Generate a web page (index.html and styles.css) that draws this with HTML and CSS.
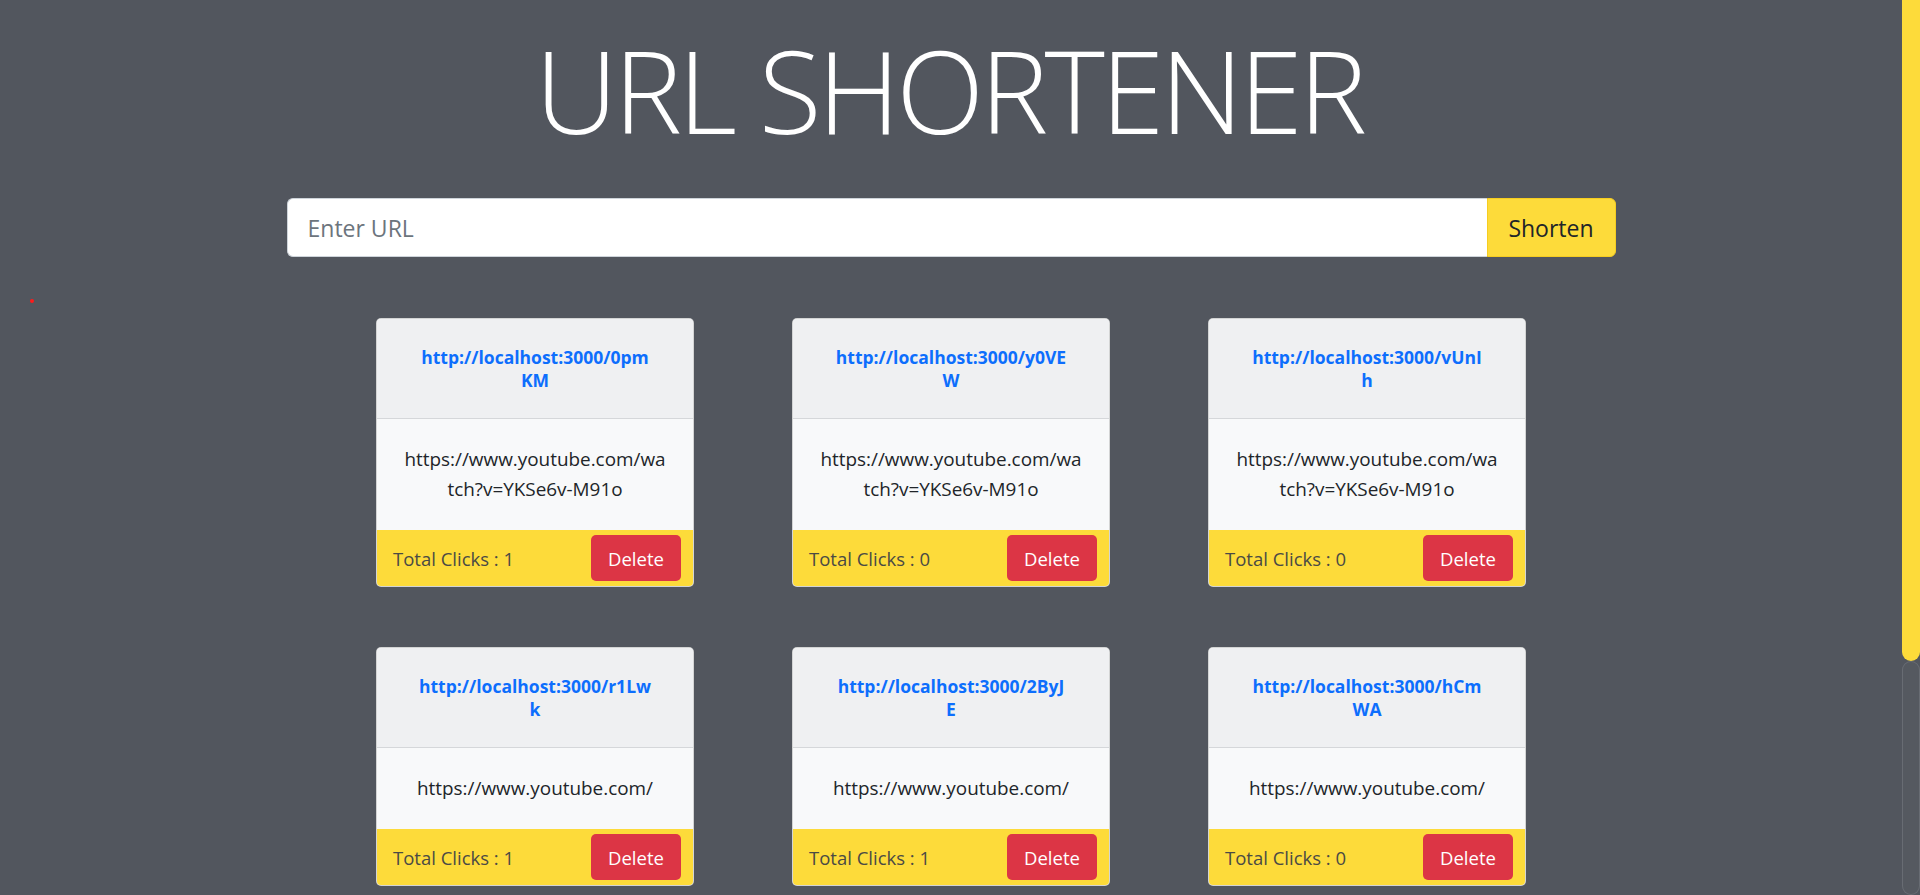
FILE: index.html
```html
<!DOCTYPE html>
<html lang="en">
<head>
<meta charset="utf-8">
<title>URL Shortener</title>
<link rel="stylesheet" href="styles.css">
</head>
<body>
<span class="dot"></span>
<div class="scrollbar" aria-hidden="true"><div class="scroll-thumb"></div><div class="scroll-track"></div></div>
<main class="page">
  <h1 class="title">URL SHORTENER</h1>
  <form class="shorten-form">
    <input class="url-input" type="text" placeholder="Enter URL">
    <button class="shorten-btn" type="button">Shorten</button>
  </form>
  <section class="cards">
    <article class="card">
      <div class="card-head"><a class="short-link" href="#">http://localhost:3000/0pmKM</a></div>
      <div class="card-body">https://www.youtube.com/watch?v=YKSe6v-M91o</div>
      <div class="card-foot"><span class="clicks">Total Clicks : 1</span><button class="del-btn" type="button">Delete</button></div>
    </article>
    <article class="card">
      <div class="card-head"><a class="short-link" href="#">http://localhost:3000/y0VEW</a></div>
      <div class="card-body">https://www.youtube.com/watch?v=YKSe6v-M91o</div>
      <div class="card-foot"><span class="clicks">Total Clicks : 0</span><button class="del-btn" type="button">Delete</button></div>
    </article>
    <article class="card">
      <div class="card-head"><a class="short-link" href="#">http://localhost:3000/vUnIh</a></div>
      <div class="card-body">https://www.youtube.com/watch?v=YKSe6v-M91o</div>
      <div class="card-foot"><span class="clicks">Total Clicks : 0</span><button class="del-btn" type="button">Delete</button></div>
    </article>
    <article class="card">
      <div class="card-head"><a class="short-link" href="#">http://localhost:3000/r1Lwk</a></div>
      <div class="card-body">https://www.youtube.com/</div>
      <div class="card-foot"><span class="clicks">Total Clicks : 1</span><button class="del-btn" type="button">Delete</button></div>
    </article>
    <article class="card">
      <div class="card-head"><a class="short-link" href="#">http://localhost:3000/2ByJE</a></div>
      <div class="card-body">https://www.youtube.com/</div>
      <div class="card-foot"><span class="clicks">Total Clicks : 1</span><button class="del-btn" type="button">Delete</button></div>
    </article>
    <article class="card">
      <div class="card-head"><a class="short-link" href="#">http://localhost:3000/hCmWA</a></div>
      <div class="card-body">https://www.youtube.com/</div>
      <div class="card-foot"><span class="clicks">Total Clicks : 0</span><button class="del-btn" type="button">Delete</button></div>
    </article>
  </section>
</main>
</body>
</html>
```

FILE: styles.css
```css
html {
  background: #52565e;
  scrollbar-width: none;
}
html::-webkit-scrollbar {
  display: none;
}
body {
  margin: 0;
  background: #52565e;
  font-family: "Open Sans", "Noto Sans", sans-serif;
  color: #212529;
  position: relative;
}
.dot {
  position: absolute;
  left: 30px;
  top: 299px;
  width: 4px;
  height: 4px;
  border-radius: 50%;
  background: #ff1a1a;
}
.scrollbar {
  position: fixed;
  top: 0;
  right: 0;
  width: 18px;
  height: 100vh;
  display: flex;
  flex-direction: column;
  background: #52565e;
  z-index: 10;
}
.scroll-thumb {
  height: 661px;
  flex: none;
  background: #fddb3a;
  border-radius: 0 0 9px 9px;
}
.scroll-track {
  flex: 1;
  border-radius: 9px;
  box-shadow: inset 0 0 0 1px #686c73;
  background: #555960;
}
.page {
  width: calc(100% - 18px);
  display: flex;
  flex-direction: column;
  align-items: center;
  padding-bottom: 325px;
}
.title {
  margin: 0;
  padding-top: 21px;
  padding-right: 4px;
  font-weight: 300;
  font-size: 115px;
  line-height: 1.2;
  color: #ffffff;
  letter-spacing: -4px;
}
.shorten-form {
  display: flex;
  width: 1329px;
  height: 59px;
  margin-top: 39px;
}
.url-input {
  flex: 1;
  min-width: 0;
  border: 1px solid #ced4da;
  border-right: none;
  border-radius: 6px 0 0 6px;
  padding: 0 20px;
  font-family: inherit;
  font-size: 23px;
  color: #212529;
  background: #fff;
  outline: none;
}
.url-input::placeholder {
  color: #6c757d;
}
.shorten-btn {
  border: 1px solid #f6cd20;
  border-radius: 0 6px 6px 0;
  background: #fddb3a;
  padding: 0 20px;
  font-family: inherit;
  font-size: 23px;
  color: #212529;
  width: 129px;
}
.cards {
  display: grid;
  grid-template-columns: repeat(3, 318px);
  column-gap: 98px;
  row-gap: 60px;
  margin-top: 61px;
}
.card {
  display: flex;
  flex-direction: column;
  border: 1px solid rgba(0, 0, 0, 0.15);
  border-radius: 5px;
  overflow: hidden;
  background: #f8f9fa;
}
.card-head {
  height: 99px;
  display: flex;
  align-items: center;
  justify-content: center;
  padding: 0 41.7px;
  background: #eff0f2;
  border-bottom: 1px solid #d5d7da;
  text-align: center;
}
.short-link {
  color: #0d6efd;
  font-weight: 700;
  font-size: 17.5px;
  line-height: 23px;
  text-decoration: none;
  word-break: break-all;
}
.card-body {
  padding: 25px 27px 26px;
  text-align: center;
  font-size: 18.9px;
  line-height: 30px;
  word-break: break-all;
  color: #212529;
}
.card-foot {
  display: flex;
  align-items: center;
  justify-content: space-between;
  padding: 5px 12px 5px 16px;
  background: #fddb3a;
}
.clicks {
  font-size: 18.5px;
  color: #4a4a45;
}
.del-btn {
  width: 90px;
  height: 46px;
  border: none;
  border-radius: 5px;
  background: #dc3545;
  color: #fff;
  font-family: inherit;
  font-size: 18.5px;
  padding: 0;
}
```
